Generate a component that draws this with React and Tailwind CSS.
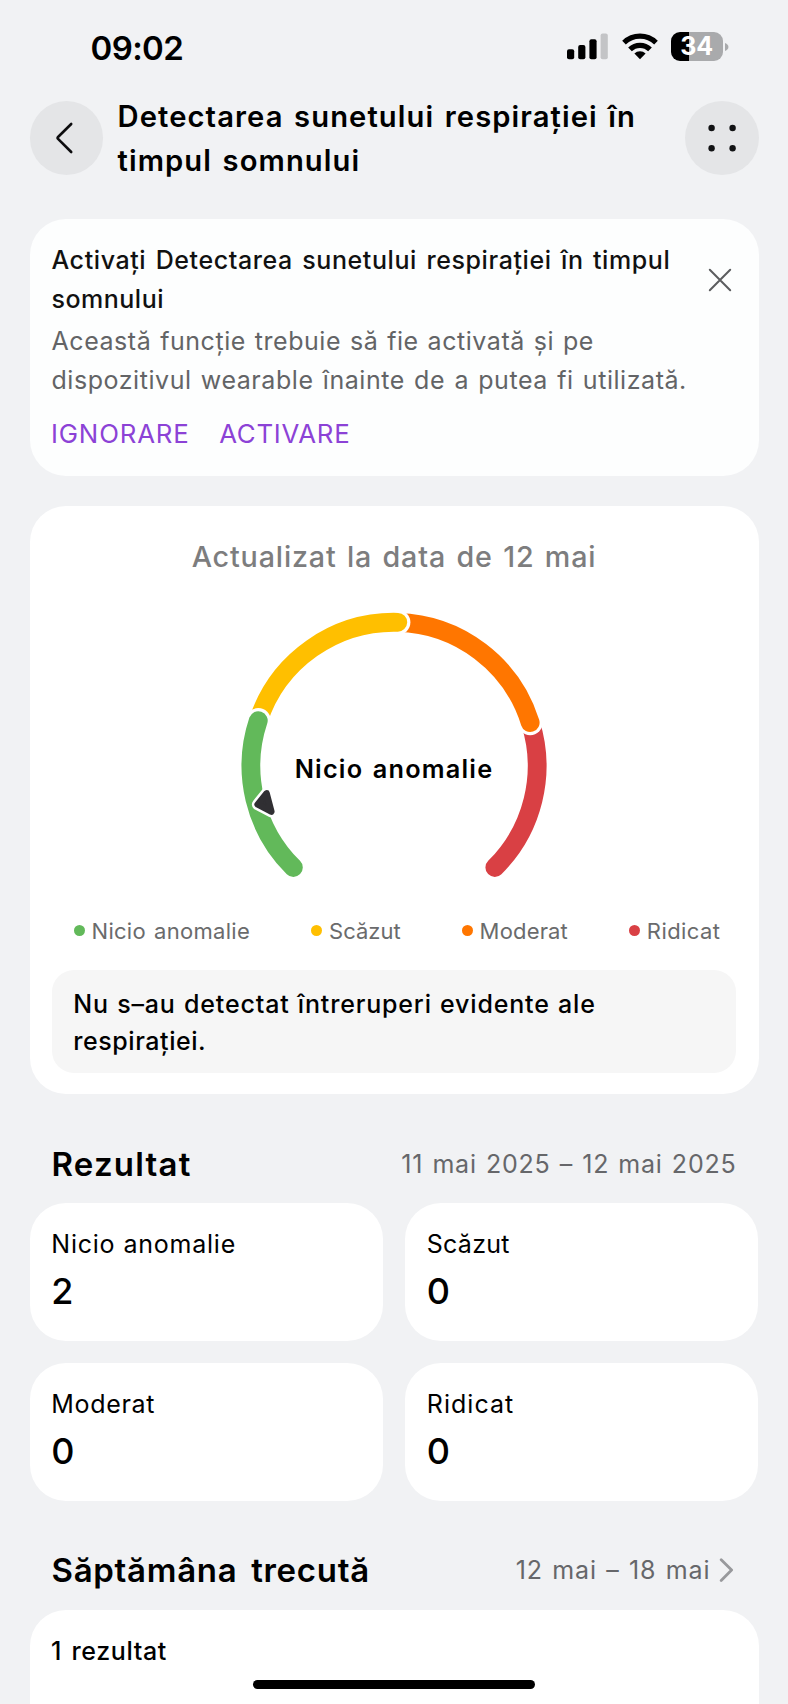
const LEVELS = [
  { label: "Nicio anomalie", count: 2, dot: "bg-[#62b95a]", legend: "tracking-[0.3px] [word-spacing:1.6px]", card: "tracking-[0.75px] [word-spacing:0.5px]" },
  { label: "Scăzut", count: 0, dot: "bg-[#ffbf00]", legend: "tracking-[0.02px]", card: "tracking-[0.26px]" },
  { label: "Moderat", count: 0, dot: "bg-[#ff7600]", legend: "tracking-[0.17px]", card: "tracking-[0.68px]" },
  { label: "Ridicat", count: 0, dot: "bg-[#d94044]", legend: "tracking-[0.43px]", card: "tracking-[1.05px]" },
];

function StatusBar() {
  return (
    <div className="flex h-[94px] items-start justify-between pr-[59.5px] pl-[90.5px]">
      <span className="mt-[27.5px] h-10 text-[33px] leading-10 font-[590] tracking-[-0.6px]">09:02</span>
      <div className="mt-[32px] flex items-start">
        <svg className="mt-px h-[28px] w-[41px]" viewBox="0 0 41 28">
          <rect x="0" y="16.3" width="7.2" height="10" rx="2" />
          <rect x="11.2" y="12" width="7.2" height="14.3" rx="2" />
          <rect x="22.4" y="6.3" width="7.2" height="20" rx="2" />
          <rect x="33.6" y="0.6" width="7.2" height="25.7" rx="2" fill="#c3c4c6" />
        </svg>
        <svg className="mt-px ml-[13.5px] h-[27px] w-[36px]" viewBox="0 0 36 27">
          <path d="M18 26.2 L12.4 20.6 A7.9 7.9 0 0 1 23.6 20.6 Z" />
          <path d="M8 16.4 A14.2 14.2 0 0 1 28 16.4" fill="none" stroke="#000" strokeWidth="5.2" />
          <path d="M2 9.6 A23 23 0 0 1 34 9.6" fill="none" stroke="#000" strokeWidth="5.2" />
        </svg>
        <div className="ml-[13px] flex h-[28.7px] w-[52.3px] items-center justify-center rounded-[9px] bg-[linear-gradient(to_right,#000_18px,#a9aaac_18px)]">
          <span className="text-[25px] leading-none font-bold text-white">34</span>
        </div>
        <svg className="mt-[10.5px] ml-[1.7px] h-2 w-[4px]" viewBox="0 0 4 8">
          <path d="M0 0 C4.6 1.6 4.6 6.4 0 8 Z" fill="#a9aaac" />
        </svg>
      </div>
    </div>
  );
}

function Header() {
  return (
    <header className="flex h-[88px] items-center pr-[29.5px] pl-[29.5px]">
      <button className="flex size-[73.5px] shrink-0 items-center justify-center rounded-full bg-[#e4e5e7]">
        <svg className="size-[36px]" viewBox="0 0 36 36" fill="none" stroke="#0c0c0e" strokeWidth="2.6" strokeLinecap="round" strokeLinejoin="round">
          <path d="M23.2 4 L9.8 17.2 Q9.2 18 9.8 18.7 L23.2 32" />
        </svg>
      </button>
      <h1 className="mt-[1.5px] ml-[14.5px] flex-1 text-[29.2px] leading-[44px] font-[590] tracking-[1.1px] whitespace-nowrap [word-spacing:2px]">
        Detectarea sunetului respirației în
        <br />
        timpul somnului
      </h1>
      <button className="flex size-[73.5px] shrink-0 items-center justify-center rounded-full bg-[#e4e5e7]">
        <svg className="size-[36px]" viewBox="0 0 36 36" fill="#111214">
          <circle cx="7.6" cy="8" r="3.2" />
          <circle cx="28.6" cy="8" r="3.2" />
          <circle cx="7.6" cy="28.2" r="3.2" />
          <circle cx="28.6" cy="28.2" r="3.2" />
        </svg>
      </button>
    </header>
  );
}

function ActivationCard() {
  return (
    <section className="mx-[29.5px] mt-[37px] flex h-[257.3px] rounded-[36px] bg-[#fdfefe] pt-[22px] pl-[22px]">
      <div className="w-[656px] shrink-0 whitespace-nowrap">
        <h2 className="text-[25px] leading-[39px] font-medium tracking-[0.59px] text-[#111] [word-spacing:2.2px]">
          Activați Detectarea sunetului respirației în timpul
          <br />
          <span className="tracking-[0.5px]">somnului</span>
        </h2>
        <p className="mt-[3px] text-[25px] leading-[38.7px] tracking-[0.55px] text-[#636466] [word-spacing:1.7px]">
          <span className="[word-spacing:1.3px]">Această funcție trebuie să fie activată și pe</span>
          <br />
          dispozitivul wearable înainte de a putea fi utilizată.
        </p>
        <div className="mt-[14.5px] flex gap-[29.5px] text-[25.8px] leading-[40px] text-[#8c42d6]">
          <button className="-ml-[0.5px] tracking-[0.85px]">IGNORARE</button>
          <button className="tracking-[0.75px]">ACTIVARE</button>
        </div>
      </div>
      <svg className="mt-[26.5px] size-6" viewBox="0 0 24 24" stroke="#5c5d5f" strokeWidth="2" strokeLinecap="round">
        <path d="M1.8 1.8 L22.2 22.2 M22.2 1.8 L1.8 22.2" />
      </svg>
    </section>
  );
}

function Gauge() {
  return (
    <svg className="h-[290px] w-[320px]" viewBox="234 600 320 290" fill="none">
      <g strokeWidth="18.8" strokeLinecap="round">
        <path d="M530.3 722.4 A142.9 142.9 0 0 1 494.8 867.5" stroke="#d94044" />
        <circle cx="530.2" cy="722.6" r="12.6" fill="#fff" />
        <path d="M397.8 622.4 A142.9 142.9 0 0 1 530.2 722.6" stroke="#ff7600" />
        <circle cx="397.8" cy="622.3" r="12.6" fill="#fff" />
        <path d="M258.3 720.6 A142.9 142.9 0 0 1 397.8 622.3" stroke="#ffbf00" />
        <circle cx="258.3" cy="720.6" r="12.6" fill="#fff" />
        <path d="M293.4 867.5 A142.9 142.9 0 0 1 258.3 720.6" stroke="#62b95a" />
      </g>
      <g strokeLinejoin="round">
        <path d="M266.6 793.3 L257.6 804.5 L271.4 811.6 Z" fill="#fff" stroke="#fff" strokeWidth="11.5" />
        <path d="M266.6 793.3 L257.6 804.5 L271.4 811.6 Z" fill="#302f33" stroke="#302f33" strokeWidth="6.4" />
      </g>
      <text x="394" y="777.8" textAnchor="middle" fill="#000" className="text-[25.3px] font-semibold tracking-[1.2px] [word-spacing:2px]">
        Nicio anomalie
      </text>
    </svg>
  );
}

function SummaryCard() {
  return (
    <section className="mx-[29.5px] mt-[29.7px] flex h-[588.5px] flex-col items-center rounded-[36px] bg-white pt-[31px]">
      <h2 className="h-[40px] text-[28.7px] leading-[40px] font-[450] tracking-[0.84px] whitespace-nowrap text-[#7d7d7e] [word-spacing:1.9px]">
        Actualizat la data de 12 mai
      </h2>
      <div className="mt-[23px] h-[290px]">
        <Gauge />
      </div>
      <ul className="mt-[31px] ml-[6px] flex h-5 w-[647px] items-center justify-between">
        {LEVELS.map((l) => (
          <li key={l.label} className="flex items-center gap-[7px]">
            <span className={`size-[11px] rounded-full ${l.dot}`} />
            <span className={`text-[22px] leading-5 whitespace-nowrap text-[#6a6b6c] ${l.legend}`}>{l.label}</span>
          </li>
        ))}
      </ul>
      <p className="mt-[28.8px] h-[103.5px] w-[684px] rounded-[22px] bg-[#f6f6f6] pt-[16px] pl-[21.3px] text-[25px] leading-[36.8px] font-medium tracking-[0.83px] whitespace-nowrap [word-spacing:0.8px]">
        Nu s–au detectat întreruperi evidente ale
        <br />
        <span className="tracking-[0.56px]">respirației.</span>
      </p>
    </section>
  );
}

function ResultCard({ level }) {
  return (
    <div className="h-[138px] rounded-[36px] bg-white pt-[21px] pl-[21.5px]">
      <p className={`text-[25px] leading-10 ${level.card}`}>{level.label}</p>
      <p className="mt-[4px] text-[36px] leading-[46px] font-medium">{level.count}</p>
    </div>
  );
}

export default function App() {
  return (
    <div className="h-[1704px] w-[788px] overflow-hidden bg-[#f1f2f4] font-['Inter','Liberation_Sans',sans-serif] text-black">
      <StatusBar />
      <Header />
      <ActivationCard />
      <SummaryCard />

      <div className="mt-[49.5px] flex h-10 items-center justify-between pr-[51.5px] pl-[51.5px] whitespace-nowrap">
        <h2 className="text-[33px] leading-10 font-semibold tracking-[1.2px]">Rezultat</h2>
        <span className="text-[25px] leading-10 tracking-[0.8px] text-[#66676a] [word-spacing:1.3px]">11 mai 2025 – 12 mai 2025</span>
      </div>
      <div className="mt-[19px] grid grid-cols-2 gap-x-[22.5px] gap-y-[22px] px-[29.8px]">
        {LEVELS.map((l) => (
          <ResultCard key={l.label} level={l} />
        ))}
      </div>

      <div className="mt-[49.5px] flex h-10 items-center pr-[54.5px] pl-[51.5px] whitespace-nowrap">
        <h2 className="text-[33px] leading-10 font-semibold tracking-[0.7px] [word-spacing:4.8px]">Săptămâna trecută</h2>
        <span className="ml-auto text-[25px] leading-10 tracking-[0.9px] text-[#66676a] [word-spacing:1.4px]">12 mai – 18 mai</span>
        <svg className="ml-[8px] h-6 w-[15px]" viewBox="0 0 15 24" fill="none" stroke="#98999c" strokeWidth="2.8" strokeLinecap="round" strokeLinejoin="round">
          <path d="M2.2 1.8 L12.6 12 L2.2 22.4" />
        </svg>
      </div>
      <section className="mx-[29.5px] mt-[19.5px] h-[94px] rounded-t-[36px] bg-white pt-[21px]">
        <p className="ml-[21.5px] h-10 text-[25px] leading-10 font-medium tracking-[0.6px] whitespace-nowrap [word-spacing:2.3px]">1 rezultat</p>
        <div className="mx-auto mt-[9px] h-[9px] w-[281.5px] rounded-full bg-black" />
      </section>
    </div>
  );
}
